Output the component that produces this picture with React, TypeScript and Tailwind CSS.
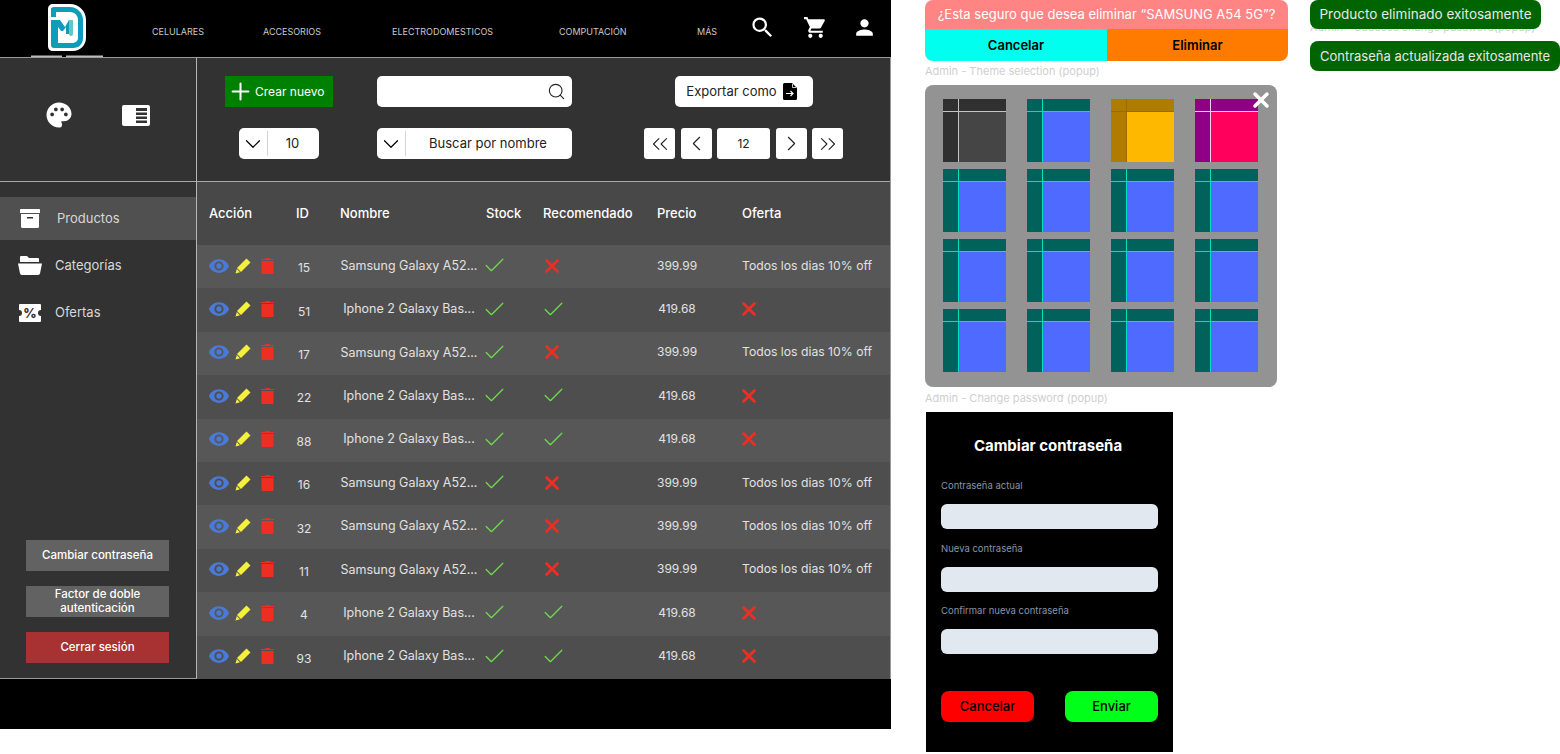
import { Check, ChevronDown, ChevronLeft, ChevronRight, ChevronsLeft, ChevronsRight, Plus, Search, X } from "lucide-react";
import { MdPalette, MdPerson, MdSearch, MdShoppingCart, MdVisibility } from "react-icons/md";

const navLinks = [
  { label: "CELULARES", cls: "ml-[49px] w-[111px]" },
  { label: "ACCESORIOS", cls: "w-[129px]" },
  { label: "ELECTRODOMESTICOS", cls: "w-[167px]" },
  { label: "COMPUTACIÓN", cls: "w-[138px]" },
  { label: "MÁS", cls: "w-[46px]" },
];

const samsung = { name: "Samsung Galaxy A52...", rec: false, price: "399.99", offer: "Todos los dias 10% off" };
const iphone = { name: "Iphone 2 Galaxy Bas...", rec: true, price: "419.68", offer: "" };

const rows = [
  { id: 15, ...samsung },
  { id: 51, ...iphone },
  { id: 17, ...samsung },
  { id: 22, ...iphone },
  { id: 88, ...iphone },
  { id: 16, ...samsung },
  { id: 32, ...samsung },
  { id: 11, ...samsung },
  { id: 4, ...iphone },
  { id: 93, ...iphone },
];

const themes = [
  { bar: "bg-[#303030]", body: "bg-[#454545]", line: "bg-[#c4c4c4]" },
  { bar: "bg-[#00625a]", body: "bg-[#4f6bff]", line: "bg-[#00e0c0]" },
  { bar: "bg-[#b07c00]", body: "bg-[#ffb800]", line: "bg-[#9a6c00]" },
  { bar: "bg-[#8f0087]", body: "bg-[#ff005c]", line: "bg-[#f0d0f0]" },
  ...Array.from({ length: 12 }, () => ({ bar: "bg-[#00625a]", body: "bg-[#4f6bff]", line: "bg-[#00e0c0]" })),
];

function Logo() {
  return (
    <svg width="72" height="54" viewBox="0 0 72 54" className="ml-[31px] mt-[3px] shrink-0">
      <path d="M22 1h17c9 0 16 7 16 16v18c0 7-6 13-13 13H22c-3 0-5-2-5-5V6c0-3 2-5 5-5z" fill="#fff" />
      <path d="M23 4h16c7 0 13 6 13 13v18c0 6-4 10-10 10H23c-2 0-3-1-3-3V6c0-1 1-2 3-2z" fill="#0e9cb8" />
      <path d="M25 9h14c5 0 8 4 8 8v18c0 3-3 5-6 5H25z" fill="#fff" />
      <rect x="17" y="14" width="8" height="3" fill="#fff" />
      <path d="M24 17h5l5 7 4-7h1v14h-4v-7l-3 4h-2l-3-4v16h-3z" fill="#0e9cb8" />
      <path d="M38 17h4v14c0 1-1 2-2 2s-2-1-2-2z" fill="#5ec8c4" />
      <rect x="0" y="52.500" width="31" height="1.500" fill="#bdbdbd" />
      <rect x="35" y="52.500" width="37" height="1.500" fill="#bdbdbd" />
    </svg>
  );
}

function Header() {
  return (
    <header className="flex h-[57px] items-center bg-black">
      <Logo />
      <nav className="flex items-center pt-[6px]">
        {navLinks.map((link) => (
          <span key={link.label} className={`${link.cls} text-[9px] text-[#c9c9c9]`}>
            {link.label}
          </span>
        ))}
      </nav>
      <div className="ml-[6px] flex items-center pb-[3px] text-white">
        <MdSearch size={27} />
        <MdShoppingCart size={25} className="ml-[27px]" />
        <MdPerson size={25} className="ml-[24px]" />
      </div>
    </header>
  );
}

function SidebarIcon() {
  return (
    <svg width="28" height="21" viewBox="0 0 28 21">
      <rect width="28" height="21" rx="2" fill="#fff" />
      <path d="M14 3h11v3H14zM14 7.500h11v2.500H14zM14 11.500h11v2.500H14zM14 15.500h11v2.500H14z" fill="#333" />
    </svg>
  );
}

function BoxIcon() {
  return (
    <svg width="20" height="19" viewBox="0 0 20 19">
      <rect width="20" height="4" rx="0.500" fill="#fff" />
      <path d="M1 5h18v12.500a1.500 1.500 0 0 1-1.500 1.500h-15A1.500 1.500 0 0 1 1 17.500z" fill="#fff" />
      <rect x="7" y="8" width="6" height="1.500" fill="#333" />
    </svg>
  );
}

function FolderIcon() {
  return (
    <svg width="24" height="19" viewBox="0 0 24 19">
      <path d="M3 0h6l2 2h9a1 1 0 0 1 1 1v3H2V1a1 1 0 0 1 1-1z" fill="#fff" />
      <path d="M0 7.500h24l-2 10a2 2 0 0 1-2 1.500H4a2 2 0 0 1-2-1.500z" fill="#fff" />
    </svg>
  );
}

function OfferIcon() {
  return (
    <svg width="22" height="18" viewBox="0 0 22 18">
      <path d="M1 0h20a1 1 0 0 1 1 1v5a3 3 0 0 0 0 6v5a1 1 0 0 1-1 1H1a1 1 0 0 1-1-1v-5a3 3 0 0 0 0-6V1a1 1 0 0 1 1-1z" fill="#fff" />
      <text x="11" y="13.500" textAnchor="middle" fontSize="13" fontWeight="800" fill="#333">%</text>
    </svg>
  );
}

function PencilIcon() {
  return (
    <svg width="16" height="16" viewBox="0 0 16 16">
      <path d="M11.500.5 15.500 4.500 6 14 2 10z" fill="#f5f03c" />
      <path d="M1.800 11 5 14.200 0.500 15.500z" fill="#f5f03c" />
    </svg>
  );
}

function TrashIcon() {
  return (
    <svg width="13" height="16" viewBox="0 0 13 16">
      <path d="M0 1h4l.5-1h4l.5 1h4v1H0z" fill="#ee2e22" />
      <path d="M.5 3h12v12a1 1 0 0 1-1 1h-10a1 1 0 0 1-1-1z" fill="#ee2e22" />
    </svg>
  );
}

function Sidebar() {
  return (
    <aside className="flex w-[197px] shrink-0 flex-col border-r border-[#b5b5b5] bg-[#323232]">
      <div className="flex h-[124px] shrink-0 items-center border-b border-[#a8a8a8] pb-[9px] pl-[44px]">
        <MdPalette size={30} className="text-white" />
        <div className="ml-[48px]"><SidebarIcon /></div>
      </div>
      <div className="mt-[15px] flex flex-col gap-[4px] text-[13px] text-[#d8d8d8]">
        <div className="flex h-[43px] items-center bg-[#505050] pl-[20px]">
          <span className="mr-[17px] flex"><BoxIcon /></span>
          Productos
        </div>
        <div className="flex h-[43px] items-center pl-[18px]">
          <span className="mr-[13px] flex"><FolderIcon /></span>
          Categorías
        </div>
        <div className="flex h-[43px] items-center pl-[19px]">
          <span className="mr-[14px] flex"><OfferIcon /></span>
          Ofertas
        </div>
      </div>
      <div className="mb-[15px] ml-[26px] mt-auto flex w-[143px] flex-col gap-[15px] text-center text-[11.500px] font-medium leading-[13.500px] text-white">
        <div className="flex h-[31px] items-center justify-center bg-[#626262]">Cambiar contraseña</div>
        <div className="flex h-[31px] items-center justify-center bg-[#626262]">Factor de doble<br />autenticación</div>
        <div className="flex h-[31px] items-center justify-center bg-[#a83232] pt-[1px]">Cerrar sesión</div>
      </div>
    </aside>
  );
}

function ExportIcon() {
  return (
    <svg width="14" height="17" viewBox="0 0 14 17">
      <path d="M1.500 0H9l5 5v10.500a1.500 1.500 0 0 1-1.500 1.500h-11A1.500 1.500 0 0 1 0 15.500v-14A1.500 1.500 0 0 1 1.500 0z" fill="#000" />
      <path d="M3 10.500h7M7.500 8l2.500 2.500L7.500 13" stroke="#fff" strokeWidth="1.200" fill="none" />
      <path d="M9.500 1v3.500H13" stroke="#fff" strokeWidth="0.800" fill="none" />
    </svg>
  );
}

function SelectBox({ width, label }: { width: string; label: string }) {
  return (
    <div className={`${width} flex h-[31px] items-center rounded-[5px] bg-white text-[13px] text-[#222]`}>
      <div className="flex h-[25px] w-[29px] shrink-0 items-center justify-center border-r border-[#d4d4d4]">
        <ChevronDown size={26} strokeWidth={1.100} className="shrink-0 text-black" />
      </div>
      <span className="flex-1 pr-[2px] text-center">{label}</span>
    </div>
  );
}

function PageButton({ children, cls = "w-[31px]" }: { children: React.ReactNode; cls?: string }) {
  return <div className={`${cls} flex h-[31px] items-center justify-center rounded-[3px] bg-white text-[12px] text-[#222]`}>{children}</div>;
}

function Toolbar() {
  return (
    <div className="flex h-[124px] shrink-0 border-b border-[#a8a8a8] bg-[#323232] pl-[28px] pt-[18px]">
      <div className="flex w-[108px] flex-col items-center gap-[21px]">
        <div className="flex h-[31px] w-[108px] items-center bg-[#008000] pl-[2px] text-[12px] text-white">
          <Plus size={27} strokeWidth={1.800} className="mr-[1px]" />
          Crear nuevo
        </div>
        <SelectBox width="w-[80px]" label="10" />
      </div>
      <div className="ml-[44px] flex w-[195px] flex-col gap-[21px]">
        <div className="flex h-[31px] items-center justify-end rounded-[5px] bg-white pr-[6px]">
          <Search size={19} strokeWidth={1.400} className="text-[#222]" />
        </div>
        <SelectBox width="w-[195px]" label="Buscar por nombre" />
      </div>
      <div className="ml-[72px] flex w-[199px] flex-col items-center gap-[21px]">
        <div className="flex h-[31px] w-[138px] items-center justify-center gap-[6px] rounded-[5px] bg-white pr-[4px] text-[13px] text-[#222]">
          Exportar como
          <ExportIcon />
        </div>
        <div className="flex w-[199px] justify-between">
          <PageButton><ChevronsLeft size={26} strokeWidth={1} /></PageButton>
          <PageButton><ChevronLeft size={25} strokeWidth={1.100} /></PageButton>
          <PageButton cls="w-[53px]">12</PageButton>
          <PageButton><ChevronRight size={25} strokeWidth={1.100} /></PageButton>
          <PageButton><ChevronsRight size={26} strokeWidth={1} /></PageButton>
        </div>
      </div>
    </div>
  );
}

const gridCols = "grid grid-cols-[76px_55px_146px_57px_114px_85px_1fr] items-center pl-[12px]";

function Table() {
  return (
    <div className="flex-1">
      <div className={`${gridCols} h-[63px] bg-[#484848] text-[13px] font-medium text-white`}>
        <span>Acción</span>
        <span className="pl-[11px]">ID</span>
        <span>Nombre</span>
        <span>Stock</span>
        <span>Recomendado</span>
        <span>Precio</span>
        <span>Oferta</span>
      </div>
      {rows.map((row, i) => (
        <div key={i} className={`${gridCols} h-[43.400px] pb-[2px] text-[12px] text-[#e2e2e2] ${i % 2 === 0 ? "bg-[#575757]" : "bg-[#4e4e4e]"}`}>
          <div className="flex items-center">
            <MdVisibility size={22} className="-ml-[1px] text-[#4a7ad8]" />
            <span className="ml-[5px] flex"><PencilIcon /></span>
            <span className="ml-[10px] flex"><TrashIcon /></span>
          </div>
          <span className="w-[38px] pt-[5px] text-center">{row.id}</span>
          <span className="whitespace-nowrap pr-[8px] pt-[1px] text-center text-[12.500px]">{row.name}</span>
          <Check size={25} strokeWidth={1.200} className="-ml-[4px] text-[#6fdc4c]" />
          {row.rec ? (
            <Check size={25} strokeWidth={1.200} className="-ml-[2px] text-[#6fdc4c]" />
          ) : (
            <X size={22} strokeWidth={3} className="-ml-[2px] text-[#ee2e22]" />
          )}
          <span className="w-[40px] text-center">{row.price}</span>
          {row.offer ? (
            <span className="whitespace-nowrap text-[12.200px]">{row.offer}</span>
          ) : (
            <X size={22} strokeWidth={3} className="-ml-[4px] text-[#ee2e22]" />
          )}
        </div>
      ))}
    </div>
  );
}

function ThemeThumb({ bar, body, line }: { bar: string; body: string; line: string }) {
  return (
    <div className={`${body} flex h-[63px] w-[63px] flex-col`}>
      <div className="flex h-[12px] shrink-0">
        <div className={`${bar} w-[15px]`} />
        <div className={`${line} w-[1px]`} />
        <div className={`${bar} flex-1`} />
      </div>
      <div className={`${line} h-[1px]`} />
      <div className="flex flex-1">
        <div className={`${bar} w-[15px]`} />
        <div className={`${line} w-[1px]`} />
      </div>
    </div>
  );
}

function PasswordField({ label }: { label: string }) {
  return (
    <div>
      <div className="text-[9.500px] leading-[12px] text-[#8b93a8]">{label}</div>
      <div className="mt-[12px] h-[25px] rounded-[6px] bg-[#e2e8f0]" />
    </div>
  );
}

export default function App() {
  return (
    <div className="relative h-[754px] w-[1560px] overflow-hidden bg-white font-['Inter',sans-serif]">
      {/* Admin products page */}
      <div className="absolute left-0 top-0 flex h-[729px] w-[891px] flex-col bg-black">
        <Header />
        <div className="flex h-[622px] border border-l-0 border-[#9a9a9a]">
          <Sidebar />
          <div className="flex min-w-0 flex-1 flex-col">
            <Toolbar />
            <Table />
          </div>
        </div>
      </div>

      {/* Delete popup */}
      <div className="absolute left-[925px] top-0 w-[363px] overflow-hidden rounded-[8px] text-[13px]">
        <div className="flex h-[29px] items-center justify-center bg-[#ff8585] text-white">¿Esta seguro que desea eliminar “SAMSUNG A54 5G”?</div>
        <div className="flex h-[32px] font-semibold text-black">
          <div className="flex w-[182px] items-center justify-center bg-[#00ffee] pt-[1px]">Cancelar</div>
          <div className="flex flex-1 items-center justify-center bg-[#ff7b00] pt-[1px]">Eliminar</div>
        </div>
      </div>

      {/* Theme selection */}
      <div className="absolute left-[925px] top-[65px] text-[11px] leading-[13px] text-[#cfcfcf]">Admin - Theme selection (popup)</div>
      <div className="absolute left-[925px] top-[85px] h-[302px] w-[352px] rounded-[8px] bg-[#939393] pl-[18px] pt-[14px]">
        <div className="grid grid-cols-[63px_63px_63px_63px] gap-x-[21px] gap-y-[7px]">
          {themes.map((theme, i) => (
            <ThemeThumb key={i} {...theme} />
          ))}
        </div>
        <X size={24} strokeWidth={3.500} className="absolute right-[4px] top-[3px] text-white" />
      </div>

      {/* Change password */}
      <div className="absolute left-[925px] top-[392px] text-[11px] leading-[13px] text-[#cfcfcf]">Admin - Change password (popup)</div>
      <div className="absolute left-[926px] top-[412px] flex h-[340px] w-[247px] flex-col bg-black px-[15px] pt-[24px]">
        <div className="pr-[3px] text-center text-[15px] font-bold leading-[19px] text-white">Cambiar contraseña</div>
        <div className="mt-[25px] flex flex-col gap-[13.700px]">
          <PasswordField label="Contraseña actual" />
          <PasswordField label="Nueva contraseña" />
          <PasswordField label="Confirmar nueva contraseña" />
        </div>
        <div className="mt-[37px] flex justify-between text-[13px] font-medium text-black">
          <div className="flex h-[31px] w-[93px] items-center justify-center rounded-[8px] bg-[#ff0000]">Cancelar</div>
          <div className="flex h-[31px] w-[93px] items-center justify-center rounded-[8px] bg-[#00ff19]">Enviar</div>
        </div>
      </div>

      {/* Toasts */}
      <div className="absolute left-[1310px] top-[21px] text-[11px] leading-[13px] text-[#cfcfcf]">Admin - Success change password(popup)</div>
      <div className="absolute left-[1310px] top-0 flex h-[29px] w-[231px] items-center justify-center rounded-[8px] bg-[#006400] text-[13.500px] text-[#e8e8e8]">Producto eliminado exitosamente</div>
      <div className="absolute left-[1310px] top-[41px] flex h-[30px] w-[250px] items-center justify-center rounded-[8px] bg-[#006400] pt-[1px] text-[13px] text-[#e8e8e8]">Contraseña actualizada exitosamente</div>
    </div>
  );
}
